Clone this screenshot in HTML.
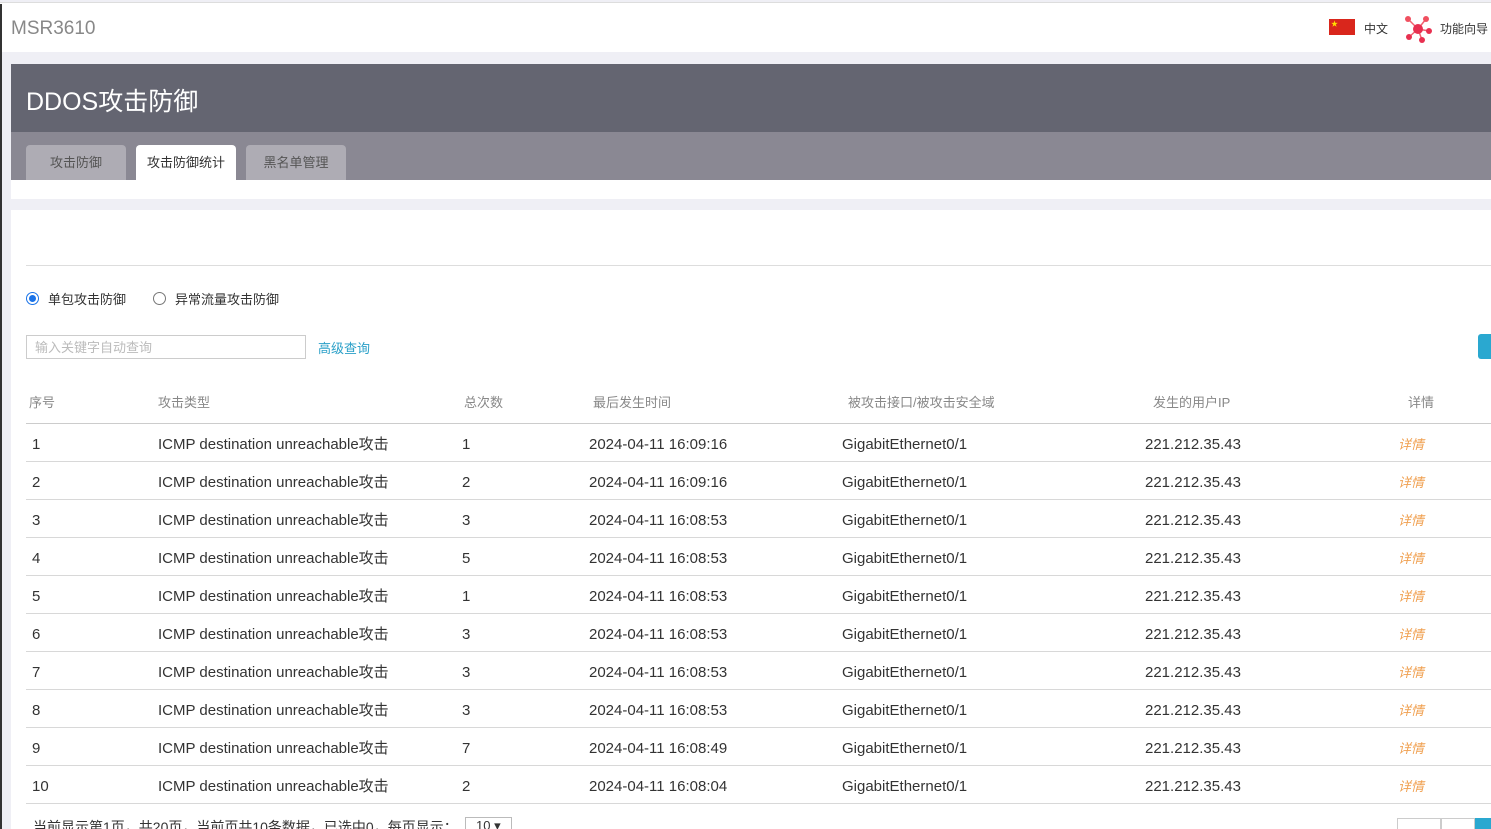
<!DOCTYPE html>
<html><head><meta charset="utf-8"><style>
*{margin:0;padding:0;box-sizing:border-box}
html,body{width:1491px;height:829px;overflow:hidden}
body{background:#efeff5;font-family:"Liberation Sans","Noto Sans CJK SC",sans-serif;position:relative;color:#333}
.abs{position:absolute}
#hdr{left:0;top:2px;width:1491px;height:50px;background:#fff;border-top:1px solid #ddd}
#lline{left:0;top:4px;width:2px;height:825px;background:#333}
.row{position:absolute;left:26px;width:1465px;height:38px;border-bottom:1px solid #d8d8d8;font-size:15px;color:#333}
.row span,.th span{position:absolute;top:12px;white-space:nowrap;line-height:18px}
.th{position:absolute;left:26px;top:380px;width:1465px;height:44px;border-bottom:1px solid #ccc;font-size:13px;color:#888}
.th span{top:14px}
.det{color:#f0a050;font-style:italic;font-size:13px}
.tab{position:absolute;top:145px;height:35px;border-radius:4px 4px 0 0;font-size:13px;text-align:center;line-height:35px}
</style></head><body>
<div id="hdr" class="abs"></div>
<div id="lline" class="abs"></div>
<div class="abs" style="left:11px;top:18px;font-size:19px;color:#888">MSR3610</div>
<div class="abs" style="left:1329px;top:19px;width:26px;height:16px;background:#d9261c"></div>
<div class="abs" style="left:1331px;top:19px;color:#ffde00;font-size:7px">★</div>
<div class="abs" style="left:1364px;top:20px;font-size:12px;color:#333">中文</div>
<svg class="abs" style="left:1404px;top:15px" width="28" height="28" viewBox="0 0 28 28"><g stroke="#f06070" stroke-width="1.5"><line x1="14" y1="14" x2="4" y2="4"/><line x1="14" y1="14" x2="22" y2="4"/><line x1="14" y1="14" x2="25" y2="16"/><line x1="14" y1="14" x2="5" y2="22"/><line x1="14" y1="14" x2="18" y2="25"/></g><circle cx="14" cy="14" r="5" fill="#e83050"/><circle cx="4" cy="4" r="3" fill="#f05060"/><circle cx="22" cy="4" r="3" fill="#f05060"/><circle cx="25" cy="16" r="3" fill="#e83050"/><circle cx="5" cy="22" r="3" fill="#e83050"/><circle cx="18" cy="25" r="3" fill="#e83050"/></svg>
<div class="abs" style="left:1440px;top:20px;font-size:12px;color:#333">功能向导</div>
<div class="abs" style="left:11px;top:64px;width:1480px;height:68px;background:#646571"></div>
<div class="abs" style="left:26px;top:82px;font-size:25px;color:#fff">DDOS攻击防御</div>
<div class="abs" style="left:11px;top:132px;width:1480px;height:48px;background:#8a8893"></div>
<div class="tab" style="left:26px;width:100px;background:#aeacb4;color:#555">攻击防御</div>
<div class="tab" style="left:136px;width:100px;background:#fff;color:#333">攻击防御统计</div>
<div class="tab" style="left:246px;width:100px;background:#aeacb4;color:#555">黑名单管理</div>
<div class="abs" style="left:11px;top:180px;width:1480px;height:19px;background:#fff"></div>
<div class="abs" style="left:11px;top:210px;width:1480px;height:619px;background:#fff"></div>
<div class="abs" style="left:26px;top:265px;width:1465px;height:1px;background:#ddd"></div>
<div class="abs" style="left:26px;top:292px;width:13px;height:13px;border-radius:50%;border:1px solid #1a73e8"><div style="margin:2px;width:7px;height:7px;border-radius:50%;background:#1a73e8"></div></div>
<div class="abs" style="left:48px;top:289px;font-size:13px;color:#333">单包攻击防御</div>
<div class="abs" style="left:153px;top:292px;width:13px;height:13px;border-radius:50%;border:1px solid #777"></div>
<div class="abs" style="left:175px;top:289px;font-size:13px;color:#333">异常流量攻击防御</div>
<div class="abs" style="left:26px;top:335px;width:280px;height:24px;border:1px solid #ccc;font-size:13px;color:#bbb;padding:4px 8px;line-height:16px">输入关键字自动查询</div>
<div class="abs" style="left:318px;top:338px;font-size:13px;color:#2ba0c8">高级查询</div>
<div class="abs" style="left:1478px;top:334px;width:13px;height:25px;background:#2aa8d0;border-radius:3px 0 0 3px"></div>
<div class="th"><span style="left:3px">序号</span><span style="left:132px">攻击类型</span><span style="left:438px">总次数</span><span style="left:567px">最后发生时间</span><span style="left:822px">被攻击接口/被攻击安全域</span><span style="left:1127px">发生的用户IP</span><span style="left:1382px">详情</span></div>
<div id="rows"></div>
<div class="abs" style="left:33px;top:818px;font-size:14px;color:#333;white-space:nowrap;line-height:18px">当前显示第1页，共20页，当前页共10条数据，已选中0，每页显示：</div>
<div class="abs" style="left:465px;top:817px;width:47px;height:20px;border:1px solid #bbb;font-size:13px;padding-left:10px">10 ▾</div>
<div class="abs" style="left:1397px;top:818px;width:44px;height:20px;border:1px solid #ccc"></div>
<div class="abs" style="left:1441px;top:818px;width:34px;height:20px;border:1px solid #ccc"></div>
<div class="abs" style="left:1475px;top:818px;width:16px;height:20px;background:#2aa8d0"></div>
<script>
var d=[[1,1,"16:09:16"],[2,2,"16:09:16"],[3,3,"16:08:53"],[4,5,"16:08:53"],[5,1,"16:08:53"],[6,3,"16:08:53"],[7,3,"16:08:53"],[8,3,"16:08:53"],[9,7,"16:08:49"],[10,2,"16:08:04"]];
var h="";d.forEach(function(r,i){h+='<div class="row" style="top:'+(424+i*38)+'px"><span style="left:6px">'+r[0]+'</span><span style="left:132px">ICMP destination unreachable攻击</span><span style="left:436px">'+r[1]+'</span><span style="left:563px">2024-04-11 '+r[2]+'</span><span style="left:816px">GigabitEthernet0/1</span><span style="left:1119px">221.212.35.43</span><span class="det" style="left:1372px">详情</span></div>'});
document.getElementById("rows").innerHTML=h;
</script>
</body></html>
